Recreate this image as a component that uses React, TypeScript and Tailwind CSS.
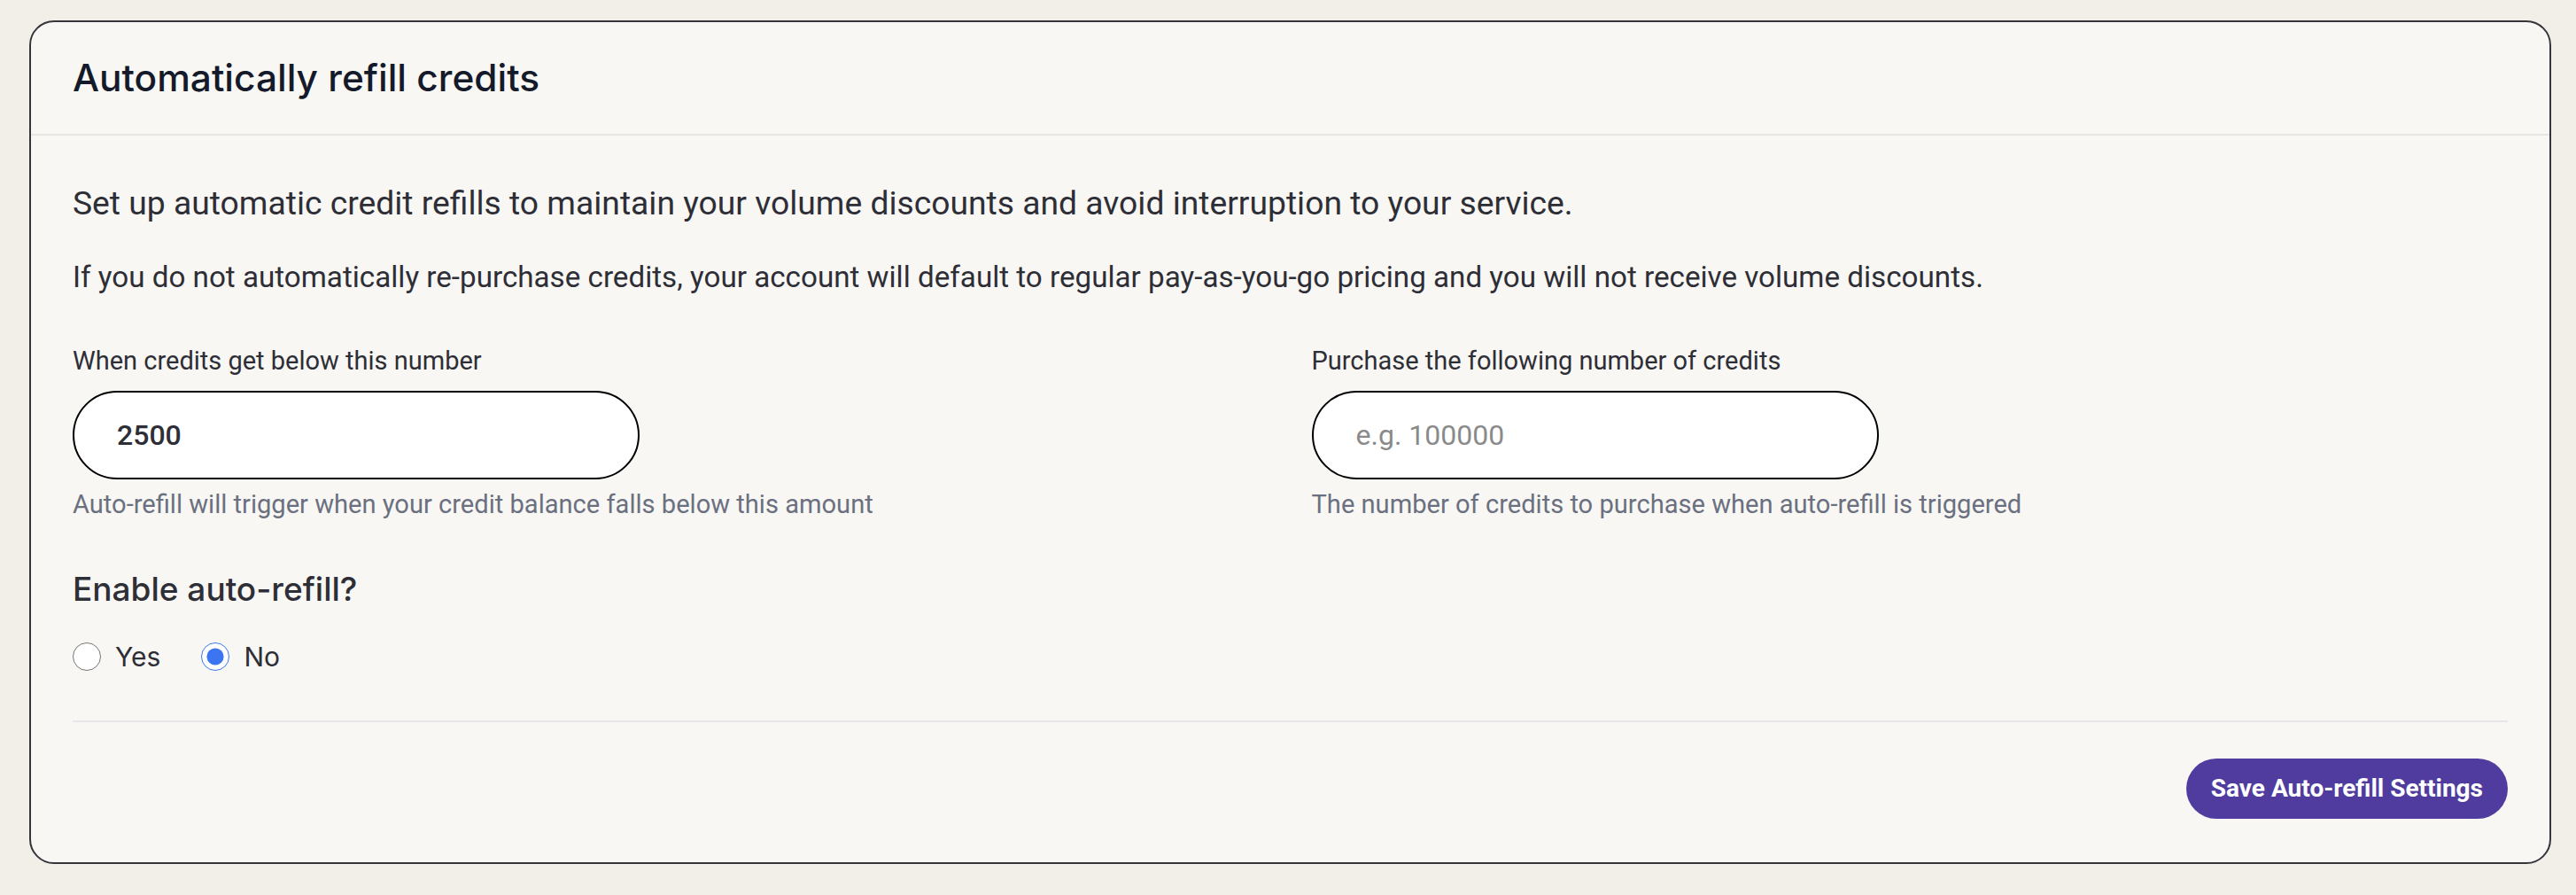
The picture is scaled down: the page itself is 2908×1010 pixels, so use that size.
import React, { useState } from 'react'

const body = { fontFamily: 'Roboto, "Liberation Sans", sans-serif' }
const head = { fontFamily: 'Inter, "Noto Sans", sans-serif' }

export default function App() {
  const [threshold, setThreshold] = useState('2500')
  const [amount, setAmount] = useState('')
  const [enabled, setEnabled] = useState<'yes' | 'no'>('no')

  return (
    <div className="min-h-screen bg-[#f2efe9] pl-[33px] pr-[28px] pt-[23px] pb-8" style={body}>
      <div className="rounded-[28px] border-2 border-[#35353b] bg-[#f8f7f4]">
        {/* Header */}
        <div className="flex h-[128px] items-center border-b-2 border-[#e7e6e2] px-[47px]">
          <h2 className="text-[42.4px] font-medium text-[#151a2b]" style={head}>
            Automatically refill credits
          </h2>
        </div>

        {/* Content */}
        <div className="px-[47px] pt-12 pb-[49px]">
          <p className="text-[37.25px] leading-[56px] text-[#2e2e36]">
            Set up automatic credit refills to maintain your volume discounts and avoid interruption to your service.
          </p>
          <p className="mt-8 text-[33.2px] leading-[48px] text-[#2e2e36]">
            If you do not automatically re-purchase credits, your account will default to regular pay-as-you-go pricing and you will not receive volume discounts.
          </p>

          <div className="mt-[50px] grid grid-cols-2 gap-12">
            <div>
              <label className="block text-[29px] leading-[40px] text-[#2e2e36]">
                When credits get below this number
              </label>
              <input
                type="text"
                value={threshold}
                onChange={(e) => setThreshold(e.target.value)}
                className="mt-[14px] h-[100px] w-[640px] rounded-full border-2 border-black bg-white px-[48px] text-[32px] font-medium text-[#2e2e36] outline-none"
              />
              <p className="mt-2 text-[29.1px] leading-[40px] text-[#6b7080]">
                Auto-refill will trigger when your credit balance falls below this amount
              </p>
            </div>
            <div>
              <label className="block text-[29px] leading-[40px] text-[#2e2e36]">
                Purchase the following number of credits
              </label>
              <input
                type="text"
                value={amount}
                placeholder="e.g. 100000"
                onChange={(e) => setAmount(e.target.value)}
                className="mt-[14px] h-[100px] w-[640px] rounded-full border-2 border-black bg-white px-[48px] text-[32px] text-[#2e2e36] outline-none placeholder:text-[#8a8a8a]"
              />
              <p className="mt-2 text-[29.1px] leading-[40px] text-[#6b7080]">
                The number of credits to purchase when auto-refill is triggered
              </p>
            </div>
          </div>

          <h3 className="mt-12 text-[37px] leading-[56px] font-medium text-[#2e2e36]" style={head}>
            Enable auto-refill?
          </h3>

          <div className="mt-6 flex items-center gap-[46px]">
            <label className="flex items-center gap-[16px] text-[30px] leading-[48px] text-[#2e2e36]" style={head}>
              <input
                type="radio"
                name="autorefill"
                checked={enabled === 'yes'}
                onChange={() => setEnabled('yes')}
                className="m-0 h-[32px] w-[32px] accent-[#3b76f0]"
              />
              Yes
            </label>
            <label className="flex items-center gap-[16px] text-[30px] leading-[48px] text-[#2e2e36]" style={head}>
              <input
                type="radio"
                name="autorefill"
                checked={enabled === 'no'}
                onChange={() => setEnabled('no')}
                className="m-0 h-[32px] w-[32px] accent-[#3b76f0]"
              />
              No
            </label>
          </div>

          <div className="mt-12 flex justify-end border-t-2 border-[#e5e7eb] pt-[41px]">
            <button className="h-[68px] rounded-full bg-[#4f3c9e] px-[28px] text-[28px] font-bold text-white">
              Save Auto-refill Settings
            </button>
          </div>
        </div>
      </div>
    </div>
  )
}
